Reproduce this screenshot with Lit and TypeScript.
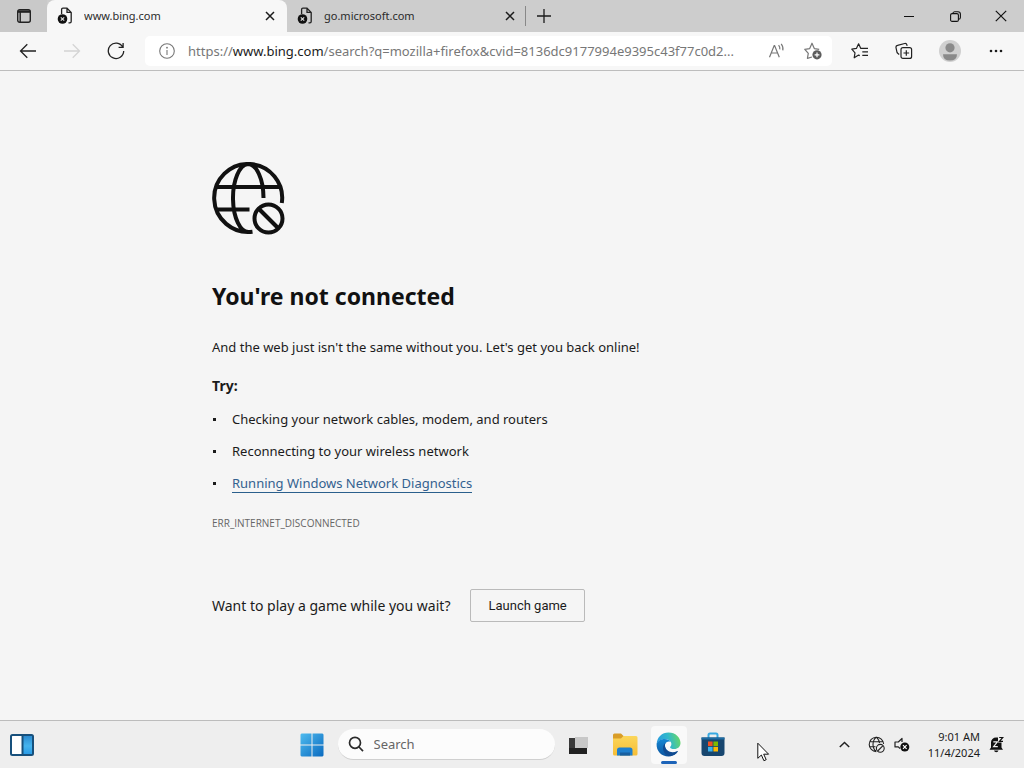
import { LitElement, html, css, svg } from "lit";
import { customElement, property } from "lit/decorators.js";

const pageIcon = svg`
  <svg class="favicon" width="16" height="18" viewBox="0 0 16 18" fill="none" stroke="#222" stroke-width="1.3">
    <path d="M4.600 7V2.500a1.300 1.300 0 0 1 1.300-1.300H10l4.200 4.200V14.500a1.300 1.300 0 0 1-1.300 1.300H11.500M10 1.200V5.400H14.200"/>
    <circle cx="5.500" cy="12" r="4.800" fill="#111" stroke="none"/>
    <path d="M3.800 10.300l3.400 3.400M7.200 10.300l-3.400 3.400" stroke="#ddd" stroke-width="1.200"/>
  </svg>`;

const closeIcon = svg`
  <svg width="10" height="10" viewBox="0 0 10 10" fill="none" stroke="#1b1b1b" stroke-width="1.5"><path d="M1 1l8 8M9 1L1 9"/></svg>`;

@customElement("browser-tab")
class BrowserTab extends LitElement {
  @property() label = "";
  @property({ type: Boolean, reflect: true }) active = false;

  static styles = css`
    :host {
      display: flex;
      align-items: center;
      width: 240px;
      min-width: 0;
      box-sizing: border-box;
      padding: 0 6px 0 10px;
      border-radius: 8px 8px 0 0;
    }
    :host([active]) { background: #f7f7f7; }
    .favicon { flex: none; margin-right: 11px; }
    .label {
      flex: 1;
      min-width: 0;
      overflow: hidden;
      white-space: nowrap;
      text-overflow: ellipsis;
      font: 11px/16px "Noto Sans", "Open Sans", sans-serif;
      color: #2b2b2b;
    }
    .close {
      display: grid;
      place-items: center;
      width: 22px;
      height: 22px;
      padding: 0;
      border: 0;
      background: none;
    }
  `;

  render() {
    return html`${pageIcon}<span class="label">${this.label}</span>
      <button class="close" aria-label="Close tab">${closeIcon}</button>`;
  }
}

@customElement("app-root")
class AppRoot extends LitElement {
  static styles = css`
    :host {
      display: flex;
      flex-direction: column;
      min-height: 100vh;
      background: #f5f5f5;
      color: #1b1b1b;
      font-family: "Noto Sans", "Open Sans", sans-serif;
    }
    * { box-sizing: border-box; }
    svg { display: block; }
    button {
      font-family: inherit;
      color: inherit;
      border: 0;
      padding: 0;
      background: none;
    }
    .icon-button {
      display: grid;
      place-items: center;
      flex: none;
      width: 44px;
      align-self: stretch;
    }
    .tab-strip {
      display: flex;
      height: 32px;
      background: #cdcdcd;
    }
    .tab-menu { width: 47px; background: #c9c9c9; }
    .new-tab {
      width: 36px;
      margin: 6px 0 6px -2px;
      border-left: 1px solid #888;
    }
    .window-controls { display: flex; margin-left: auto; }
    .window-controls .icon-button { width: 46px; }
    .toolbar {
      display: flex;
      align-items: center;
      height: 39px;
      padding: 0 6px;
      background: #f7f7f7;
      border-bottom: 1px solid #bdbdbd;
    }
    .address {
      display: flex;
      align-items: center;
      flex: 1;
      min-width: 0;
      height: 30px;
      margin: 0 6px 0 7px;
      background: #fff;
      border-radius: 5px;
    }
    .site-info { width: 43px; }
    .url {
      flex: 1;
      min-width: 0;
      overflow: hidden;
      white-space: nowrap;
      text-overflow: ellipsis;
      font-size: 13px;
      line-height: 20px;
      color: #777;
    }
    .url b { font-weight: 400; color: #1b1b1b; }
    .address .tool { width: 36px; }
    .address .tool:last-child { margin-right: 1px; }
    .profile { width: 48px; }
    main {
      flex: 1;
      width: 600px;
      max-width: 100%;
      margin: 0 auto;
      padding: 91px 0 40px;
    }
    h1 {
      margin: 45px 0 0;
      font-size: 23px;
      line-height: 32px;
      font-weight: 700;
      color: #111;
    }
    p { margin: 0; }
    .lead { margin-top: 25px; font-size: 13px; line-height: 20px; }
    h2 { margin: 19px 0 0; font-size: 14px; line-height: 20px; font-weight: 700; }
    ul { margin: 7px 0 0; padding: 0; list-style: none; }
    li {
      display: flex;
      align-items: center;
      height: 32px;
      font-size: 13px;
      line-height: 18px;
    }
    li::before {
      content: "";
      width: 3px;
      height: 3px;
      margin: 0 16px 0 1px;
      background: #1b1b1b;
    }
    li a {
      color: #33618f;
      text-decoration: none;
      border-bottom: 1px solid #2a5f8c;
    }
    .code {
      margin-top: 16px;
      font-family: "Open Sans", "Noto Sans", sans-serif;
      font-size: 10px;
      line-height: 16px;
      color: #666;
    }
    .game { display: flex; align-items: center; gap: 20px; margin-top: 58px; }
    .game p { font-size: 14px; line-height: 20px; }
    .launch {
      height: 33px;
      padding: 0 17px;
      border: 1px solid #bababa;
      border-radius: 2px;
      font: 13px/16px Roboto, "Liberation Sans", sans-serif;
    }
    .taskbar {
      display: grid;
      grid-template-columns: 1fr auto 1fr;
      height: 48px;
      background: #eeeeee;
      border-top: 1px solid #bcbcbc;
    }
    .apps, .tray { display: flex; align-items: center; }
    .search {
      display: flex;
      align-items: center;
      gap: 10px;
      width: 217px;
      height: 31px;
      margin: 0 2px 0 4px;
      padding: 0 10px;
      border-radius: 16px;
      background: #fcfcfc;
      border-bottom: 1px solid #d0d0d0;
    }
    .search input {
      flex: 1;
      min-width: 0;
      padding: 0;
      border: 0;
      outline: 0;
      background: none;
      font: 13px/20px "Noto Sans", "Open Sans", sans-serif;
    }
    .search input::placeholder { color: #666; opacity: 1; }
    .files { margin-left: 2px; }
    .edge {
      align-self: center;
      width: 36px;
      height: 38px;
      margin: 0 4px;
      border-radius: 4px;
      background: #f9f9f9;
      position: relative;
    }
    .edge::after {
      content: "";
      position: absolute;
      left: 10px;
      right: 10px;
      bottom: 0;
      height: 3px;
      border-radius: 2px;
      background: #1c63b8;
    }
    .tray { justify-content: flex-end; padding-right: 14px; }
    .tray .icon-button { width: 26px; }
    .tray .chevron { width: 38px; }
    .clock {
      width: 65px;
      margin-right: 2px;
      font-size: 11px;
      line-height: 16px;
      text-align: right;
      white-space: nowrap;
    }
    .tray .bell { width: 28px; }
    .pointer { position: absolute; left: 757px; top: 742px; pointer-events: none; }
  `;

  render() {
    return html`
      <header class="tab-strip">
        <button class="icon-button tab-menu" aria-label="Tab actions">
          <svg width="14" height="14" viewBox="0 0 14 14" fill="none" stroke="#222" stroke-width="1.400">
            <rect x=".7" y=".7" width="12.600" height="12.600" rx="2"/>
            <path d="M1 2.600H13" stroke-width="2.400"/>
            <path d="M3.200 3V13"/>
          </svg>
        </button>
        <browser-tab active label="www.bing.com"></browser-tab>
        <browser-tab label="go.microsoft.com"></browser-tab>
        <button class="icon-button new-tab" aria-label="New tab">
          <svg width="14" height="14" viewBox="0 0 14 14" stroke="#1b1b1b" stroke-width="1.300"><path d="M7 0V14M0 7H14"/></svg>
        </button>
        <div class="window-controls">
          <button class="icon-button" aria-label="Minimize">
            <svg width="10" height="10" viewBox="0 0 10 10" stroke="#111"><path d="M0 5.500H10"/></svg>
          </button>
          <button class="icon-button" aria-label="Restore">
            <svg width="11" height="11" viewBox="0 0 11 11" fill="none" stroke="#111" stroke-width="1.100">
              <rect x=".6" y="2.600" width="7.800" height="7.800" rx="1.500"/>
              <path d="M2.800 2.400A2 2 0 0 1 4.600.7H8a2.400 2.400 0 0 1 2.400 2.400V6.400a2 2 0 0 1-1.800 1.900"/>
            </svg>
          </button>
          <button class="icon-button" aria-label="Close">
            <svg width="12" height="12" viewBox="0 0 12 12" stroke="#111" stroke-width="1.200"><path d="M.8.8l10.400 10.400M11.200.8L.8 11.200"/></svg>
          </button>
        </div>
      </header>

      <nav class="toolbar">
        <button class="icon-button" aria-label="Back">
          <svg width="18" height="16" viewBox="0 0 18 16" fill="none" stroke="#222" stroke-width="1.300"><path d="M17 8H1.500M8.300 1.200L1.500 8l6.800 6.800"/></svg>
        </button>
        <button class="icon-button" aria-label="Forward" disabled>
          <svg width="18" height="16" viewBox="0 0 18 16" fill="none" stroke="#d4d4d4" stroke-width="1.300"><path d="M1 8H16.500M9.700 1.200L16.500 8l-6.800 6.800"/></svg>
        </button>
        <button class="icon-button" aria-label="Refresh">
          <svg width="18" height="18" viewBox="0 0 18 18" fill="none" stroke="#222" stroke-width="1.300">
            <path d="M15.800 5.200A7.700 7.700 0 1 0 16.700 9M16.100 1V5.400H11.600"/>
          </svg>
        </button>
        <div class="address">
          <button class="icon-button site-info" aria-label="Site information">
            <svg width="16" height="16" viewBox="0 0 16 16" fill="none" stroke="#777" stroke-width="1.100">
              <circle cx="8" cy="8" r="7.300"/><path d="M8 7V12"/><circle cx="8" cy="4.700" r=".9" fill="#777" stroke="none"/>
            </svg>
          </button>
          <span class="url">https://<b>www.bing.com</b>/search?q=mozilla+firefox&amp;cvid=8136dc9177994e9395c43f77c0d2...</span>
          <button class="icon-button tool" aria-label="Read aloud">
            <svg width="18" height="16" viewBox="0 0 18 16" fill="none" stroke="#777" stroke-width="1.200">
              <path d="M1.500 14.200L6.200 2.500h.4l4.700 11.700M3.200 10H9.600M10.600 2.200q1.600 2 1.200 4.200M13.200.8q2.400 3 1.600 6.600"/>
            </svg>
          </button>
          <button class="icon-button tool" aria-label="Add to favorites">
            <svg width="18" height="18" viewBox="0 0 18 18" fill="none" stroke="#777" stroke-width="1.200" stroke-linejoin="round">
              <path d="M8 15l-4.600 1.400.9-5L.8 7.300l4.900-.7L8 1.200l2.300 5.400 4.900.7"/>
              <circle cx="13" cy="12.800" r="4.600" fill="#5c5c5c" stroke="none"/>
              <path d="M13 10.400v4.800M10.600 12.800h4.800" stroke="#fff"/>
            </svg>
          </button>
        </div>
        <button class="icon-button" aria-label="Favorites">
          <svg width="18" height="18" viewBox="0 0 18 18" fill="none" stroke="#222" stroke-width="1.200" stroke-linejoin="round">
            <path d="M8.800 13.600l-1.200-.5-4.400 2.700.8-5L.8 7.200l4.600-.8L7.600 1.800l2.200 4.600H17M11.300 9.900H17M11.300 13.400H17"/>
          </svg>
        </button>
        <button class="icon-button" aria-label="Collections">
          <svg width="18" height="18" viewBox="0 0 18 18" fill="none" stroke="#222" stroke-width="1.200" stroke-linejoin="round">
            <rect x="6" y="5.600" width="10.600" height="10.800" rx="2"/>
            <path d="M11.300 8.200v5.600M8.500 11h5.600M4.200 12.400L2.700 11.300a2 2 0 0 1-.7-1L1 5.600a1.900 1.900 0 0 1 1.500-2.200L9.700 1.500a1.900 1.900 0 0 1 2.200 1.400l.2.900"/>
          </svg>
        </button>
        <button class="icon-button profile" aria-label="Profile">
          <svg width="22" height="22" viewBox="0 0 22 22">
            <circle cx="11" cy="11" r="11" fill="#d0d0d0"/>
            <circle cx="11" cy="7.800" r="4.600" fill="#8a8a8a"/>
            <path d="M4 14.200H18Q18 20.500 11 20.500T4 14.200Z" fill="#8a8a8a"/>
          </svg>
        </button>
        <button class="icon-button" aria-label="Settings and more">
          <svg width="14" height="4" viewBox="0 0 14 4" fill="#1b1b1b"><circle cx="2" cy="2" r="1.300"/><circle cx="7" cy="2" r="1.300"/><circle cx="12" cy="2" r="1.300"/></svg>
        </button>
      </nav>

      <main>
        <svg width="73" height="73" viewBox="0 0 73 73" fill="none" stroke="#111" stroke-width="4">
          <path d="M69.800 41A34 34 0 1 0 40.500 69.700M3.500 25H69M3.500 47.500H37.500M36 2A15.500 34 0 0 0 37 70M36 2A15.500 34 0 0 1 51.500 36"/>
          <circle cx="56.500" cy="56.500" r="14"/>
          <path d="M47 47L66 66"/>
        </svg>
        <h1>You're not connected</h1>
        <p class="lead">And the web just isn't the same without you. Let's get you back online!</p>
        <h2>Try:</h2>
        <ul>
          <li>Checking your network cables, modem, and routers</li>
          <li>Reconnecting to your wireless network</li>
          <li><a href="#">Running Windows Network Diagnostics</a></li>
        </ul>
        <p class="code">ERR_INTERNET_DISCONNECTED</p>
        <div class="game">
          <p>Want to play a game while you wait?</p>
          <button class="launch">Launch game</button>
        </div>
      </main>

      <footer class="taskbar">
        <div class="apps">
          <button class="icon-button" aria-label="Widgets">
            <svg width="24" height="22" viewBox="0 0 24 22">
              <defs><linearGradient id="wg" x1="0" y1="0" x2="0" y2="1"><stop offset="0" stop-color="#2c8bd0"/><stop offset=".55" stop-color="#45b4ee"/><stop offset="1" stop-color="#2a9be6"/></linearGradient></defs>
              <rect x="1" y="1" width="22" height="20" rx="1.500" fill="#fff" stroke="#17507c" stroke-width="2"/>
              <rect x="13" y="2" width="9" height="18" fill="url(#wg)"/>
              <path d="M12.500 1V21" stroke="#17507c" stroke-width="2"/>
            </svg>
          </button>
        </div>
        <div class="apps">
          <button class="icon-button" aria-label="Start">
            <svg width="24" height="24" viewBox="0 0 24 24">
              <defs><linearGradient id="st" x1="0" y1="0" x2="24" y2="24" gradientUnits="userSpaceOnUse"><stop offset="0" stop-color="#50bdf0"/><stop offset="1" stop-color="#0868be"/></linearGradient></defs>
              <path fill="url(#st)" d="M1.500.5H11.500V11.500H.5V1.500zM12.500.5H22.500l1 1V11.500H12.500zM.5 12.500H11.500V23.500H1.500l-1-1zM12.500 12.500H23.500V22.500l-1 1H12.500z"/>
            </svg>
          </button>
          <label class="search">
            <svg width="16" height="16" viewBox="0 0 16 16" fill="none" stroke="#2b2b2b" stroke-width="1.700"><circle cx="7" cy="6.800" r="5.500"/><path d="M11 11l4 4.200"/></svg>
            <input type="text" placeholder="Search" aria-label="Search" />
          </label>
          <button class="icon-button" aria-label="Task view">
            <svg width="24" height="22" viewBox="0 0 24 22">
              <rect x="2" y="4" width="18" height="16" fill="#3a3a3a"/>
              <path d="M2 14H20V20H2z" fill="#222"/>
              <rect x="8" y="3" width="13" height="11" fill="#c8c8c8"/>
            </svg>
          </button>
          <button class="icon-button files" aria-label="File Explorer">
            <svg width="26" height="24" viewBox="0 0 26 24">
              <defs><linearGradient id="fd" x1="0" y1="0" x2="0" y2="1"><stop offset="0" stop-color="#fbd65a"/><stop offset="1" stop-color="#f6bd36"/></linearGradient></defs>
              <path d="M1 2a1.500 1.500 0 0 1 1.500-1.500H9L11.500 3H17V8H1z" fill="#d99d28"/>
              <path d="M1 5.500H9L11.500 3H24a1.500 1.500 0 0 1 1.500 1.500V21a1.500 1.500 0 0 1-1.500 1.500H2.500A1.500 1.500 0 0 1 1 21z" fill="url(#fd)"/>
              <path d="M5 22.500V17a2.500 2.500 0 0 1 2.500-2.500H18a2.500 2.500 0 0 1 2.500 2.500V22.500z" fill="#1d7fce"/>
              <path d="M8 19.500H18V22.500H8z" fill="#175fa0"/>
            </svg>
          </button>
          <button class="icon-button edge" aria-label="Microsoft Edge">
            <svg width="25" height="25" viewBox="0 0 25 25">
              <defs>
                <linearGradient id="e1" x1="0" y1=".5" x2="1" y2=".3"><stop offset="0" stop-color="#2a9be0"/><stop offset=".5" stop-color="#30b8cb"/><stop offset="1" stop-color="#69d964"/></linearGradient>
                <linearGradient id="e2" x1="0" y1="0" x2="0" y2="1"><stop offset="0" stop-color="#1688d4"/><stop offset="1" stop-color="#0c549f"/></linearGradient>
              </defs>
              <path d="M.7 12C1 5 6 .5 12.500.5 19.500.5 24.500 5.500 24.500 11c0 3.700-2.800 6-6.100 6-2.800 0-4.300-.9-4.300-1.800 0-.8 1.300-1.200 1.300-3.300 0-2.500-2.500-5-6.400-5C5 6.900 2 9 .7 12z" fill="url(#e1)"/>
              <path d="M.6 12C1.500 9 4.600 6.900 8.600 6.900c3.300 0 5.400 1.300 6.200 3.100-4-1.400-6.200 1.200-5.800 4.200.5 4.500 5 7.800 10.200 6.600l2.600-1.200C19.900 22.700 16.500 24.500 12.600 24.500 5.600 24.500.2 19 .6 12z" fill="url(#e2)"/>
              <path d="M9.500 10.800C7.800 12.200 6.900 14 7 16.400c.2 4 3.200 7.300 7.200 7.900 3.200-.5 6-2.100 7.600-4.700.3-.5 0-.9-.5-.6-5.200 2.700-11.300.7-12.300-4.700-.2-1.300 0-2.500.5-3.500z" fill="#104b91"/>
            </svg>
          </button>
          <button class="icon-button" aria-label="Microsoft Store">
            <svg width="24" height="25" viewBox="0 0 24 25">
              <path d="M7.500 6V3a1.500 1.500 0 0 1 1.500-1.500h6A1.500 1.500 0 0 1 16.500 3V6" fill="none" stroke="#38a9e2" stroke-width="2"/>
              <path d="M.5 5.500H23.500V21a3 3 0 0 1-3 3H3.500a3 3 0 0 1-3-3z" fill="#17466f"/>
              <path d="M.5 5.500H23.500V7.500H.5z" fill="#1c6ba3"/>
              <path d="M7 9.500h4.600v4.600H7z" fill="#f25022"/><path d="M12.400 9.500H17v4.600h-4.600z" fill="#7fba00"/>
              <path d="M7 14.900h4.600v4.600H7z" fill="#3bb2ee"/><path d="M12.400 14.900H17v4.600h-4.600z" fill="#ffb900"/>
            </svg>
          </button>
        </div>
        <div class="tray">
          <button class="icon-button chevron" aria-label="Show hidden icons">
            <svg width="11" height="7" viewBox="0 0 11 7" fill="none" stroke="#222" stroke-width="1.500"><path d="M.8 6L5.500 1.500 10.200 6"/></svg>
          </button>
          <button class="icon-button" aria-label="Network: not connected">
            <svg width="17" height="17" viewBox="0 0 17 17" fill="none" stroke="#222" stroke-width="1.100">
              <path d="M15.600 8A7.200 7.200 0 1 0 8.300 15.600M1.600 5.700H15M1.600 10.700H7.500M8.300 1.200Q5 4 5 8.400T8.300 15.600M8.300 1.200Q11.400 4 11.500 7"/>
              <circle cx="12.300" cy="12.300" r="3.900"/><path d="M9.700 15L15 9.600"/>
            </svg>
          </button>
          <button class="icon-button" aria-label="Volume: no device">
            <svg width="16" height="15" viewBox="0 0 16 15" fill="none" stroke="#222" stroke-width="1.200" stroke-linejoin="round">
              <path d="M6 11.500L4.300 9.900H1V5H4.300L8 1.500V5"/>
              <circle cx="10.800" cy="10" r="4.500" fill="#111" stroke="none"/><path d="M9 8.200l3.600 3.600M12.600 8.200L9 11.800" stroke="#fff"/>
            </svg>
          </button>
          <div class="clock"><div>9:01 AM</div><div>11/4/2024</div></div>
          <button class="icon-button bell" aria-label="Notifications">
            <svg width="15" height="17" viewBox="0 0 15 17">
              <path d="M2 11.500V6.500A5 5 0 0 1 7 1.500H9V6.500H12.500V11.500l1.500 2.300H.5z" fill="#111"/>
              <path d="M5 14.500H9.500a2.300 2.300 0 0 1-4.500 0z" fill="#111"/>
              <path d="M4.300 5.800H8.400L4.600 10.600H8.800" fill="none" stroke="#eee" stroke-width="1.200"/>
              <path d="M10.200 1.500H13.700L10.500 5.300H14" fill="none" stroke="#111" stroke-width="1.200"/>
            </svg>
          </button>
        </div>
      </footer>

      <svg class="pointer" width="13" height="20" viewBox="0 0 13 20" fill="#fff" stroke="#111" stroke-linejoin="round">
        <path d="M.8 1.200V16.300L4.400 13l2.500 5.700 2.300-1L6.700 12.200H11.600z"/>
      </svg>
    `;
  }
}
